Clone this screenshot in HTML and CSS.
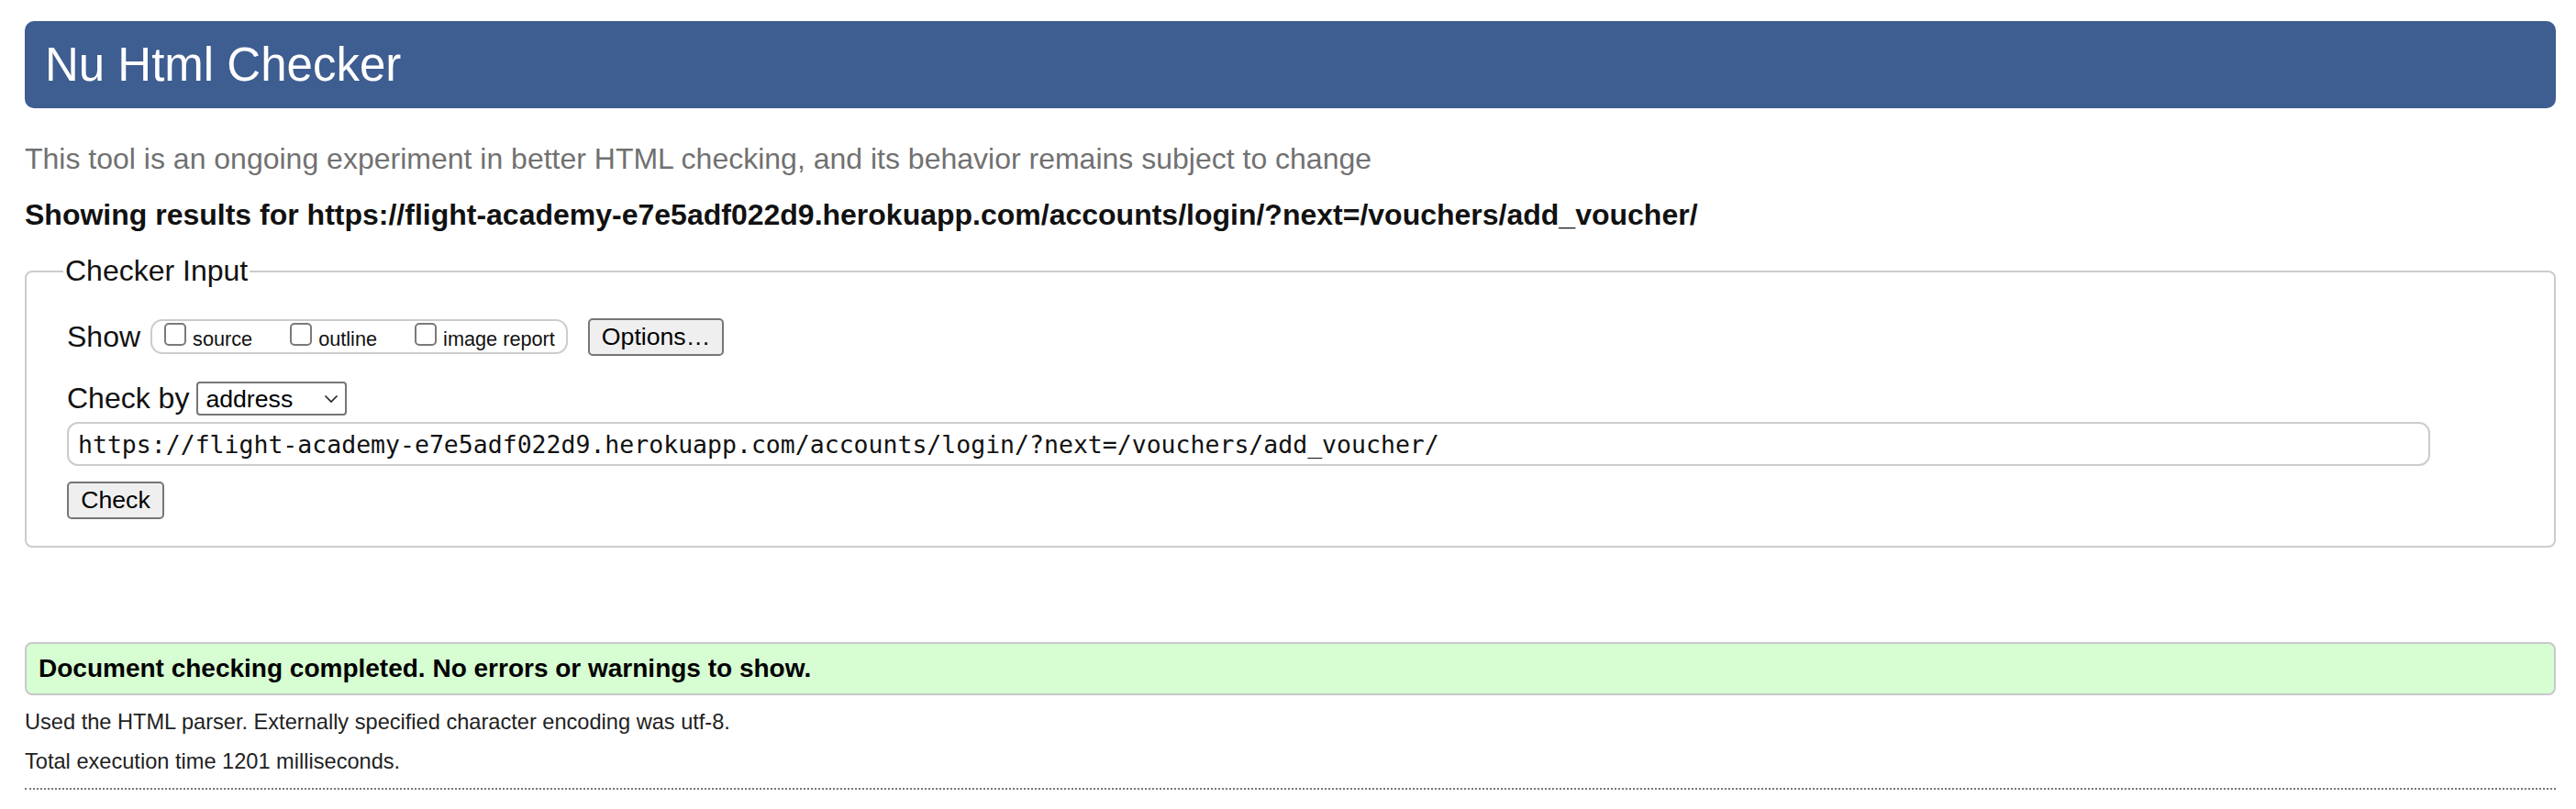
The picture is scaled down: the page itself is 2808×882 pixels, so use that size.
FILE: index.html
```html
<!DOCTYPE html>
<html lang="en">
<head>
<meta charset="utf-8">
<title>Nu Html Checker</title>
<link rel="stylesheet" href="styles.css">
</head>
<body>
<h1 class="title">Nu Html Checker</h1>
<p class="about">This tool is an ongoing experiment in better HTML checking, and its behavior remains subject to change</p>
<p class="showing">Showing results for https://flight-academy-e7e5adf022d9.herokuapp.com/accounts/login/?next=/vouchers/add_voucher/</p>
<form class="checker">
  <fieldset class="input-box">
    <legend class="input-legend">Checker Input</legend>
    <div class="row show-row">
      <span class="row-label">Show</span>
      <div class="opts">
        <label class="opt"><input type="checkbox" class="cb"><span class="opt-text">source</span></label>
        <label class="opt"><input type="checkbox" class="cb"><span class="opt-text">outline</span></label>
        <label class="opt"><input type="checkbox" class="cb"><span class="opt-text">image report</span></label>
      </div>
      <button type="button" class="btn btn-options">Options…</button>
    </div>
    <div class="row by-row">
      <span class="row-label">Check by</span>
      <div class="select-wrap">
        <select class="select"><option>address</option></select>
        <svg class="chev" width="16" height="10" viewBox="0 0 16 10"><path d="M1.5 1.5 L8 8 L14.5 1.5" fill="none" stroke="#222" stroke-width="1.6"/></svg>
      </div>
    </div>
    <input class="url" type="text" value="https://flight-academy-e7e5adf022d9.herokuapp.com/accounts/login/?next=/vouchers/add_voucher/">
    <button type="button" class="btn btn-check">Check</button>
  </fieldset>
</form>
<p class="success">Document checking completed. No errors or warnings to show.</p>
<p class="details">Used the HTML parser. Externally specified character encoding was utf-8.</p>
<p class="details">Total execution time 1201 milliseconds.</p>
<hr class="rule">
</body>
</html>
```

FILE: styles.css
```css
html {
  background: #ffffff;
}

body {
  margin: 0;
  padding: 23px 22px 0 27px;
  font-family: "Liberation Sans", Arial, Helvetica, sans-serif;
  color: #111;
}

.title {
  margin: 0;
  height: 95px;
  box-sizing: border-box;
  padding: 0 22px;
  line-height: 95px;
  font-size: 51px;
  font-weight: normal;
  color: #ffffff;
  background: #3e5d91;
  border-radius: 10px;
}

.about {
  margin: 37px 0 0;
  font-size: 32px;
  line-height: 37px;
  color: #717171;
}

.showing {
  margin: 24px 0 0;
  font-size: 32px;
  line-height: 37px;
  font-weight: bold;
  color: #111;
}

.checker {
  margin: 24px 0 0;
}

.input-box {
  margin: 0;
  min-width: 0;
  padding: 32px 135px 29px 44px;
  border: 2px solid #cccccc;
  border-radius: 8px;
}

.input-legend {
  margin-left: -4px;
  padding: 0 2px;
  font-size: 32px;
  line-height: 37px;
  color: #111;
}

.row {
  display: flex;
  align-items: center;
}

.show-row {
  height: 42px;
}

.by-row {
  height: 37px;
  margin-top: 28px;
}

.row-label {
  font-size: 32px;
  line-height: 37px;
  color: #111;
}

.opts {
  display: flex;
  align-items: center;
  gap: 41px;
  height: 38px;
  box-sizing: border-box;
  margin-left: 11px;
  padding: 0 12px 0 13px;
  border: 2px solid #cccccc;
  border-radius: 13px;
}

.opt {
  display: inline-block;
  font-size: 21.7px;
  line-height: 25px;
  color: #111;
  white-space: nowrap;
}

.cb {
  -webkit-appearance: none;
  appearance: none;
  display: inline-block;
  vertical-align: baseline;
  width: 24px;
  height: 25px;
  margin: 0 7px 0 0;
  box-sizing: border-box;
  border: 2px solid #7a7a7a;
  border-radius: 5px;
  background: #ffffff;
}

.btn {
  box-sizing: border-box;
  height: 41px;
  padding: 0 13px;
  border: 2px solid #767676;
  border-radius: 5px;
  background: #efefef;
  font-family: "Liberation Sans", Arial, Helvetica, sans-serif;
  font-size: 26.67px;
  color: #000;
}

.btn-options {
  width: 148px;
  margin-left: 22px;
}

.select-wrap {
  position: relative;
  margin-left: 8px;
}

.select {
  -webkit-appearance: none;
  appearance: none;
  display: block;
  width: 164px;
  height: 37px;
  box-sizing: border-box;
  padding: 0 0 0 8px;
  border: 2px solid #767676;
  border-radius: 4px;
  background: #ffffff;
  font-family: "Liberation Sans", Arial, Helvetica, sans-serif;
  font-size: 26.67px;
  color: #000;
}

.chev {
  position: absolute;
  right: 9px;
  top: 14px;
  pointer-events: none;
}

.url {
  display: block;
  width: 100%;
  height: 48px;
  box-sizing: border-box;
  margin: 7px 0 0;
  padding: 0 10px;
  border: 2px solid #cccccc;
  border-radius: 12px;
  font-family: "DejaVu Sans Mono", "Liberation Mono", monospace;
  font-size: 26.5px;
  color: #111;
  background: #ffffff;
}

.btn-check {
  display: block;
  width: 106px;
  margin-top: 17px;
}

.success {
  margin: 103px 0 0;
  height: 58px;
  box-sizing: border-box;
  padding: 0 13px;
  border: 2px solid #c8c8c8;
  border-radius: 8px;
  background: #d7fdd2;
  font-size: 28px;
  line-height: 54px;
  font-weight: bold;
  color: #000;
}

.details {
  margin: 15px 0 0;
  font-size: 23.6px;
  line-height: 28px;
  color: #222;
}

.rule {
  margin: 15px 0 0;
  height: 0;
  border: 0;
  border-top: 2px dotted #777777;
}
```
